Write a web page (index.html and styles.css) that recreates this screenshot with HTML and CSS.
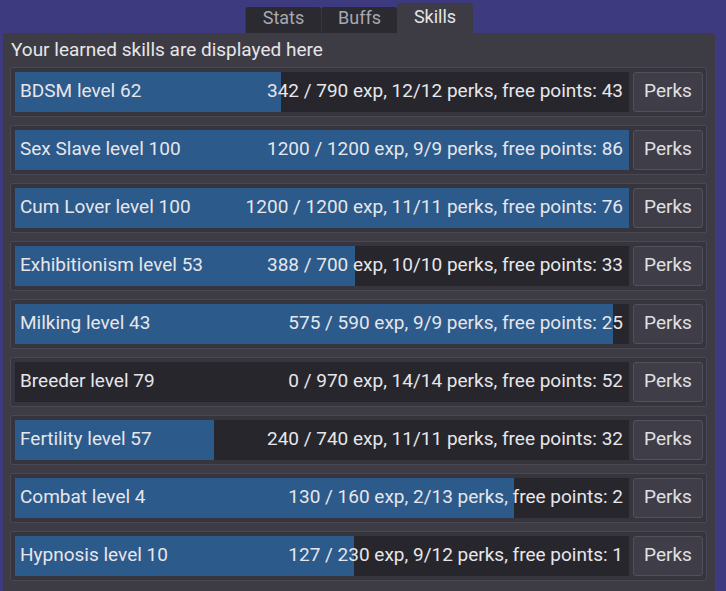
FILE: index.html
```html
<!DOCTYPE html>
<html>
<head>
<meta charset="utf-8">
<link rel="stylesheet" href="styles.css">
</head>
<body>
<div class="tabs">
  <div class="tab">Stats</div>
  <div class="tab">Buffs</div>
  <div class="tab active">Skills</div>
</div>
<div class="panel">
  <div class="header">Your learned skills are displayed here</div>
  <div class="rows">
    <div class="row"><div class="bar"><div class="fill" style="width:43.29%"></div><div class="labels"><span>BDSM level 62</span><span>342 / 790 exp, 12/12 perks, free points: 43</span></div></div><div class="btn">Perks</div></div>
    <div class="row"><div class="bar"><div class="fill" style="width:100%"></div><div class="labels"><span>Sex Slave level 100</span><span>1200 / 1200 exp, 9/9 perks, free points: 86</span></div></div><div class="btn">Perks</div></div>
    <div class="row"><div class="bar"><div class="fill" style="width:100%"></div><div class="labels"><span>Cum Lover level 100</span><span>1200 / 1200 exp, 11/11 perks, free points: 76</span></div></div><div class="btn">Perks</div></div>
    <div class="row"><div class="bar"><div class="fill" style="width:55.43%"></div><div class="labels"><span>Exhibitionism level 53</span><span>388 / 700 exp, 10/10 perks, free points: 33</span></div></div><div class="btn">Perks</div></div>
    <div class="row"><div class="bar"><div class="fill" style="width:97.46%"></div><div class="labels"><span>Milking level 43</span><span>575 / 590 exp, 9/9 perks, free points: 25</span></div></div><div class="btn">Perks</div></div>
    <div class="row"><div class="bar"><div class="fill" style="width:0%"></div><div class="labels"><span>Breeder level 79</span><span>0 / 970 exp, 14/14 perks, free points: 52</span></div></div><div class="btn">Perks</div></div>
    <div class="row"><div class="bar"><div class="fill" style="width:32.43%"></div><div class="labels"><span>Fertility level 57</span><span>240 / 740 exp, 11/11 perks, free points: 32</span></div></div><div class="btn">Perks</div></div>
    <div class="row"><div class="bar"><div class="fill" style="width:81.25%"></div><div class="labels"><span>Combat level 4</span><span>130 / 160 exp, 2/13 perks, free points: 2</span></div></div><div class="btn">Perks</div></div>
    <div class="row"><div class="bar"><div class="fill" style="width:55.22%"></div><div class="labels"><span>Hypnosis level 10</span><span>127 / 230 exp, 9/12 perks, free points: 1</span></div></div><div class="btn">Perks</div></div>
  </div>
</div>
</body>
</html>
```
FILE: styles.css
```css
html, body {
  margin: 0;
  padding: 0;
  background: #3e3a7f;
  height: 100%;
  overflow: hidden;
}
body {
  font-family: Roboto, "Liberation Sans", sans-serif;
  font-size: 19px;
  color: #e6e6ea;
}
.tabs {
  display: flex;
  justify-content: center;
  align-items: flex-end;
  height: 33px;
  margin: 0 11px 0 3px;
  font-size: 18px;
}
.tab {
  width: 76px;
  height: 26px;
  box-sizing: border-box;
  background: #2b2a31;
  color: #a8a8b0;
  display: flex;
  align-items: center;
  justify-content: center;
  border-left: 1px solid #38373f;
  border-radius: 3px 3px 0 0;
  padding-bottom: 5px;
}
.tab.active {
  height: 30px;
  background: #3d3c45;
  color: #e4e4e8;
  border-left: none;
  padding-bottom: 4px;
}
.panel {
  margin: 0 11px 0 3px;
  background: #3d3c45;
  border-radius: 3px 3px 0 0;
  padding: 4px 8px 10px 7px;
  min-height: 560px;
}
.header {
  height: 26px;
  line-height: 26px;
  margin-bottom: 4px;
  padding-left: 1px;
}
.rows {
  display: flex;
  flex-direction: column;
  gap: 8px;
}
.row {
  height: 50px;
  box-sizing: border-box;
  border: 1px solid #4a4953;
  background: #36353d;
  border-radius: 2px;
  padding: 4px 3px 4px 4px;
  display: flex;
  gap: 4px;
}
.bar {
  flex: 1;
  background: #27262c;
  display: grid;
}
.fill, .labels {
  grid-area: 1 / 1;
}
.fill {
  background: #2c5a8b;
  height: 100%;
}
.labels {
  display: flex;
  justify-content: space-between;
  align-items: center;
  padding: 0 6px 4px 5px;
  white-space: nowrap;
}
.btn {
  width: 70px;
  box-sizing: border-box;
  background: #3f3e48;
  border: 1px solid #52515b;
  border-radius: 3px;
  display: flex;
  align-items: center;
  justify-content: center;
  padding-bottom: 4px;
  color: #e0e0e4;
}
```
